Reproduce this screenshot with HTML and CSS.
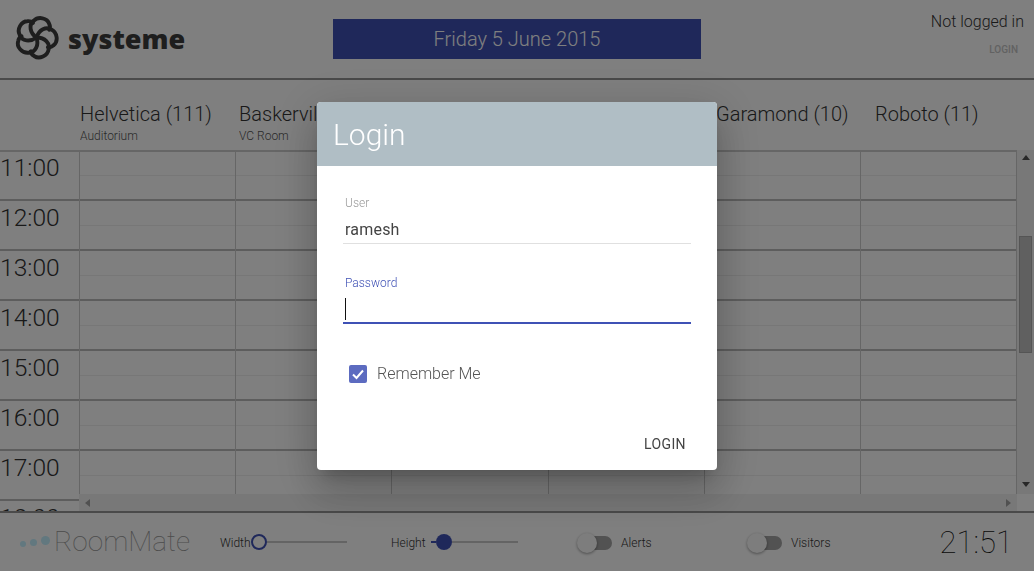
FILE: index.html
```html
<!DOCTYPE html>
<html lang="en">
<head>
  <meta charset="UTF-8" />
  <meta name="viewport" content="width=device-width, initial-scale=1.0"/>
  <title>RoomMate</title>
  <link rel="stylesheet" href="styles.css">
</head>
<body>
  <div class="page">
    <header class="topbar">
      <div class="brand">
        <svg class="brand-mark" viewBox="-23 -23 46 46" aria-hidden="true">
          <defs>
            <path id="petal" d="M0 0 C-7 -5 -8 -13 -3 -17 C2 -22 11 -20 13 -14 C14 -12 14 -10 13 -8" />
          </defs>
          <g class="petals">
            <use href="#petal" />
            <use href="#petal" transform="rotate(72)" />
            <use href="#petal" transform="rotate(144)" />
            <use href="#petal" transform="rotate(216)" />
            <use href="#petal" transform="rotate(288)" />
          </g>
        </svg>
        <span class="brand-name">systeme</span>
      </div>
      <div class="date-box">Friday 5 June 2015</div>
      <div class="user-box">
        <div class="user-status">Not logged in</div>
        <div class="user-login">LOGIN</div>
      </div>
    </header>

    <div class="rooms">
      <div class="room"><div class="room-name">Helvetica (111)</div><div class="room-type">Auditorium</div></div>
      <div class="room"><div class="room-name">Baskerville (21)</div><div class="room-type">VC Room</div></div>
      <div class="room"><div class="room-name">Futura (12)</div></div>
      <div class="room"><div class="room-name">Didot (14)</div></div>
      <div class="room"><div class="room-name">Garamond (10)</div></div>
      <div class="room"><div class="room-name">Roboto (11)</div></div>
    </div>

    <main class="schedule">
      <div class="times">
        <div class="time">11:00</div>
        <div class="time">12:00</div>
        <div class="time">13:00</div>
        <div class="time">14:00</div>
        <div class="time">15:00</div>
        <div class="time">16:00</div>
        <div class="time">17:00</div>
        <div class="time">18:00</div>
      </div>
      <div class="board">
        <div class="board-top">
          <div class="grid">
            <div class="col"></div>
            <div class="col"></div>
            <div class="col"></div>
            <div class="col"></div>
            <div class="col"></div>
            <div class="col"></div>
          </div>
          <div class="vscroll">
            <span class="arrow arrow-up"></span>
            <span class="vthumb"></span>
            <span class="arrow arrow-down"></span>
          </div>
        </div>
        <div class="board-bottom">
          <div class="hscroll">
            <span class="arrow arrow-left"></span>
            <span class="arrow arrow-right"></span>
          </div>
          <div class="corner"></div>
        </div>
      </div>
    </main>

    <footer class="bottombar">
      <div class="app-logo">
        <span class="dot dot-s"></span>
        <span class="dot dot-m"></span>
        <span class="dot dot-l"></span>
        <span class="app-name">RoomMate</span>
      </div>
      <div class="slider slider-width">
        <span class="slider-label">Width</span>
        <span class="thumb thumb-open"></span>
        <span class="track track-long"></span>
      </div>
      <div class="slider slider-height">
        <span class="slider-label">Height</span>
        <span class="track track-short"></span>
        <span class="thumb"></span>
        <span class="track track-rest"></span>
      </div>
      <div class="toggle">
        <span class="knob"></span><span class="toggle-track"></span>
        <span class="toggle-label">Alerts</span>
      </div>
      <div class="toggle">
        <span class="knob"></span><span class="toggle-track"></span>
        <span class="toggle-label">Visitors</span>
      </div>
      <div class="clock">21:51</div>
    </footer>
  </div>

  <div class="overlay">
    <form class="dialog">
      <div class="dialog-title">Login</div>
      <div class="dialog-body">
        <div class="field">
          <div class="field-label">User</div>
          <div class="field-value">ramesh</div>
        </div>
        <div class="field field-active">
          <div class="field-label">Password</div>
          <div class="field-value"><span class="caret"></span></div>
        </div>
        <div class="remember">
          <svg class="check" viewBox="0 0 18 18" aria-hidden="true">
            <rect width="18" height="18" rx="2" />
            <path d="M4 9.5 L7.5 13 L14 5.5" />
          </svg>
          <span class="remember-text">Remember Me</span>
        </div>
      </div>
      <div class="dialog-actions">
        <button type="button" class="login-btn">LOGIN</button>
      </div>
    </form>
  </div>
</body>
</html>
```

FILE: styles.css
```css
* {
  box-sizing: border-box;
}
html, body {
  height: 100%;
}
body {
  margin: 0;
  font-family: Roboto, "Liberation Sans", sans-serif;
  color: #333;
  background: #fff;
  overflow: hidden;
}
.page {
  display: flex;
  flex-direction: column;
  height: 571px;
}

/* top bar */
.topbar {
  display: flex;
  flex: none;
  height: 80px;
  border-bottom: 2px solid #949494;
}
.brand {
  display: flex;
  align-items: center;
  width: 333px;
  padding-left: 14px;
}
.brand-mark {
  width: 45px;
  height: 45px;
  margin-bottom: 4px;
}
.petals {
  fill: none;
  stroke: #3c3c3c;
  stroke-width: 4;
  stroke-linecap: round;
}
.brand-name {
  margin: 0 0 2px 9px;
  font-family: "Open Sans", sans-serif;
  font-size: 27px;
  font-weight: 800;
  color: #3c3c3c;
}
.date-box {
  width: 368px;
  height: 40px;
  margin-top: 19px;
  background: #3f51b5;
  color: #fff;
  font-size: 20px;
  font-weight: 300;
  line-height: 40px;
  text-align: center;
}
.user-box {
  flex: 1;
  padding: 12px 10px 0 0;
  text-align: right;
}
.user-status {
  font-size: 16px;
  font-weight: 300;
  line-height: 20px;
}
.user-login {
  margin-top: 12px;
  padding-right: 6px;
  font-size: 10px;
  font-weight: 500;
  line-height: 12px;
  color: #c4c4c4;
}

/* room names */
.rooms {
  display: flex;
  flex: none;
  height: 70px;
  padding: 21px 0 0 80px;
}
.room {
  flex: none;
  width: 159px;
  overflow: hidden;
  white-space: nowrap;
}
.room-name {
  font-size: 20px;
  font-weight: 300;
  line-height: 26px;
}
.room-type {
  font-size: 12px;
  font-weight: 300;
  line-height: 16px;
  margin-top: 1px;
  color: #555;
}

/* schedule */
.schedule {
  display: flex;
  flex: 1;
  min-height: 0;
}
.times {
  flex: none;
  width: 79px;
  overflow: hidden;
  border-top: 2px solid #ccc;
}
.time {
  height: 50px;
  padding-top: 3px;
  border-bottom: 2px solid #bbb;
  font-size: 24.6px;
  font-weight: 300;
  line-height: 28px;
}
.time:first-child {
  height: 49px;
  padding-top: 2px;
}
.board {
  display: flex;
  flex: 1;
  flex-direction: column;
  min-width: 0;
}
.board-top {
  display: flex;
  flex: 1;
  min-height: 0;
}
.grid {
  display: flex;
  flex: 1;
  border-top: 2px solid #ccc;
}
.col {
  flex: 1;
  border-left: 1px solid #ccc;
  background-image: repeating-linear-gradient(
    #fff 0, #fff 23px,
    #eee 23px, #eee 24px,
    #fff 24px, #fff 47px,
    #bbb 47px, #bbb 49px,
    #fff 49px, #fff 50px
  );
}
.col:last-child {
  border-right: 1px solid #ccc;
}
.vscroll {
  display: flex;
  flex: none;
  flex-direction: column;
  align-items: center;
  width: 17px;
  background: #f1f1f1;
}
.vthumb {
  width: 13px;
  height: 117px;
  margin-top: 76px;
  margin-bottom: auto;
  background: #c1c1c1;
  border: 1px solid #aaa;
}
.board-bottom {
  display: flex;
  flex: none;
  height: 17px;
}
.hscroll {
  display: flex;
  flex: 1;
  align-items: center;
  justify-content: space-between;
  padding: 0 6px;
  background: #f1f1f1;
}
.corner {
  width: 17px;
  background: #fff;
}
.arrow {
  width: 0;
  height: 0;
  border: 4px solid transparent;
}
.arrow-up {
  margin-top: 5px;
  border-top: 0;
  border-bottom: 5px solid #505050;
}
.arrow-down {
  margin-bottom: 7px;
  border-bottom: 0;
  border-top: 5px solid #505050;
}
.arrow-left {
  border-left: 0;
  border-right: 5px solid #a3a3a3;
}
.arrow-right {
  border-right: 0;
  border-left: 5px solid #a3a3a3;
}

/* bottom bar */
.bottombar {
  display: flex;
  flex: none;
  align-items: center;
  height: 60px;
  border-top: 2px solid #949494;
}
.app-logo {
  display: flex;
  flex: none;
  align-items: center;
  width: 220px;
  padding: 0 0 2px 20px;
}
.dot {
  flex: none;
  border-radius: 50%;
  background: #c4f0ff;
}
.dot-s {
  width: 6px;
  height: 6px;
  margin-top: 6px;
}
.dot-m {
  width: 7px;
  height: 7px;
  margin: 2px 0 0 4px;
}
.dot-l {
  width: 9px;
  height: 9px;
  margin: -2px 0 0 4px;
}
.app-name {
  margin-left: 4px;
  font-size: 28px;
  font-weight: 100;
  color: #999;
}
.slider {
  display: flex;
  flex: none;
  align-items: center;
}
.slider-width {
  width: 171px;
}
.slider-height {
  width: 186px;
}
.slider-label {
  padding-top: 1px;
  font-size: 12px;
  font-weight: 300;
}
.slider-height .slider-label {
  padding-top: 2px;
  margin-right: 5px;
}
.thumb {
  flex: none;
  width: 16px;
  height: 16px;
  border-radius: 50%;
  background: #3f51b5;
}
.thumb-open {
  background: #fff;
  border: 2px solid #3f51b5;
}
.track {
  height: 2px;
  background: #c8c8c8;
}
.track-long {
  width: 80px;
}
.track-short {
  width: 5px;
  background: #3f51b5;
}
.track-rest {
  width: 66px;
}
.toggle {
  display: flex;
  flex: none;
  align-items: center;
  width: 170px;
  padding-top: 2px;
}
.knob {
  position: relative;
  flex: none;
  width: 20px;
  height: 20px;
  margin-right: -10px;
  border-radius: 50%;
  background: #fafafa;
  box-shadow: 0 1px 3px rgba(0, 0, 0, 0.4);
}
.toggle-track {
  width: 25px;
  height: 14px;
  border-radius: 0 7px 7px 0;
  background: #a4a4a4;
}
.toggle-label {
  margin-left: 9px;
  font-size: 12px;
  font-weight: 300;
}
.clock {
  margin-left: auto;
  padding-right: 21px;
  font-size: 31px;
  font-weight: 100;
  color: #111;
}

/* login dialog */
.overlay {
  position: fixed;
  inset: 0;
  display: flex;
  align-items: center;
  justify-content: center;
  background: rgba(0, 0, 0, 0.5);
}
.dialog {
  width: 400px;
  height: 368px;
  margin-top: 1px;
  overflow: hidden;
  border-radius: 4px;
  background: #fff;
  box-shadow: 0 11px 15px -7px rgba(0, 0, 0, 0.2), 0 24px 38px 3px rgba(0, 0, 0, 0.14), 0 9px 46px 8px rgba(0, 0, 0, 0.12);
}
.dialog-title {
  height: 64px;
  padding-left: 16px;
  background: #b0bec5;
  color: #fff;
  font-size: 30px;
  font-weight: 300;
  line-height: 66px;
}
.dialog-body {
  height: 260px;
  padding: 30px 26px 0;
}
.field {
  height: 48px;
  border-bottom: 1px solid #e0e0e0;
  margin-bottom: 32px;
}
.field-label {
  padding-left: 2px;
  font-size: 12px;
  font-weight: 300;
  line-height: 14px;
  color: #999;
}
.field-value {
  padding: 4px 0 0 2px;
  font-size: 16px;
  letter-spacing: 0.2px;
  line-height: 32px;
  color: #444;
}
.field-active {
  border-bottom: 2px solid #3f51b5;
}
.field-active .field-label {
  color: #3f51b5;
}
.field-active .field-value {
  padding-top: 8px;
}
.caret {
  display: block;
  width: 1px;
  height: 22px;
  background: #111;
}
.remember {
  display: flex;
  align-items: center;
  gap: 10px;
  margin-top: 39px;
  padding-left: 6px;
  font-size: 16px;
  font-weight: 300;
  color: #555;
}
.remember-text {
  margin-top: 1px;
  line-height: 20px;
}
.check {
  width: 18px;
  height: 18px;
}
.check rect {
  fill: #5c6bc0;
}
.check path {
  fill: none;
  stroke: #fff;
  stroke-width: 2;
}
.dialog-actions {
  display: flex;
  justify-content: flex-end;
  padding-right: 23px;
}
.login-btn {
  height: 36px;
  padding: 0 8px;
  border: none;
  background: none;
  color: #444;
  font-family: Roboto, sans-serif;
  font-size: 14px;
  letter-spacing: 0.4px;
}
```
